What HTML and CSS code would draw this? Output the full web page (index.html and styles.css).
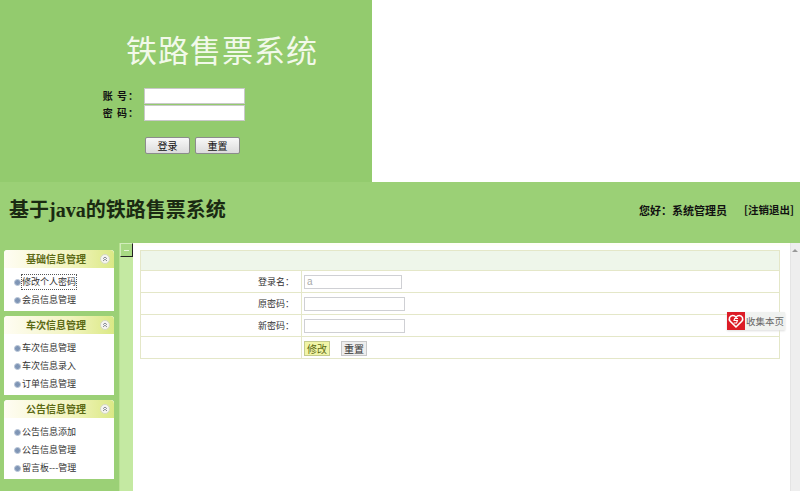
FILE: index.html
```html
<!DOCTYPE html>
<html lang="zh">
<head>
<meta charset="utf-8">
<title>铁路售票系统</title>
<link rel="stylesheet" href="styles.css">
</head>
<body>
<section class="login-row">
  <form class="login">
    <h1 class="login-title">铁路售票系统</h1>
    <div class="login-fields">
      <label class="login-label">账 号：</label><input class="login-input" type="text">
      <label class="login-label">密 码：</label><input class="login-input" type="password">
    </div>
    <div class="login-actions">
      <button class="login-btn" type="button">登录</button>
      <button class="login-btn" type="button">重置</button>
    </div>
  </form>
</section>
<header class="top">
  <div class="brand">基于java的铁路售票系统</div>
  <div class="user"><span>您好：系统管理员</span><span class="logout">[注销退出]</span></div>
</header>
<div class="main">
  <aside class="side">
    <div class="panel">
      <div class="panel-head"><span class="panel-title">基础信息管理</span><svg class="fold" viewBox="0 0 10 10" width="10" height="10"><circle cx="5" cy="5" r="4.500" fill="#f6f6f0" stroke="#d6d8c4"/><path d="M3 4.800 5 3l2 1.800M3 7 5 5.200 7 7" fill="none" stroke="#7a7f8c" stroke-width=".9"/></svg></div>
      <ul class="menu">
        <li><span class="focus">修改个人密码</span></li>
        <li>会员信息管理</li>
      </ul>
    </div>
    <div class="panel">
      <div class="panel-head"><span class="panel-title">车次信息管理</span><svg class="fold" viewBox="0 0 10 10" width="10" height="10"><circle cx="5" cy="5" r="4.500" fill="#f6f6f0" stroke="#d6d8c4"/><path d="M3 4.800 5 3l2 1.800M3 7 5 5.200 7 7" fill="none" stroke="#7a7f8c" stroke-width=".9"/></svg></div>
      <ul class="menu">
        <li>车次信息管理</li>
        <li>车次信息录入</li>
        <li>订单信息管理</li>
      </ul>
    </div>
    <div class="panel">
      <div class="panel-head"><span class="panel-title">公告信息管理</span><svg class="fold" viewBox="0 0 10 10" width="10" height="10"><circle cx="5" cy="5" r="4.500" fill="#f6f6f0" stroke="#d6d8c4"/><path d="M3 4.800 5 3l2 1.800M3 7 5 5.200 7 7" fill="none" stroke="#7a7f8c" stroke-width=".9"/></svg></div>
      <ul class="menu">
        <li>公告信息添加</li>
        <li>公告信息管理</li>
        <li>留言板---管理</li>
      </ul>
    </div>
  </aside>
  <div class="splitter"><span class="split-btn"></span></div>
  <main class="content">
    <table class="form-table">
      <tr><td class="caption" colspan="2"></td></tr>
      <tr><td class="key">登录名：</td><td class="val"><input class="field short" type="text" value="a" readonly></td></tr>
      <tr><td class="key">原密码：</td><td class="val"><input class="field" type="password"></td></tr>
      <tr><td class="key">新密码：</td><td class="val"><input class="field" type="password"></td></tr>
      <tr><td class="key"></td><td class="val"><button class="act act-on" type="button">修改</button><button class="act" type="button">重置</button></td></tr>
    </table>
    <div class="collect">
      <svg class="collect-icon" viewBox="0 0 18 18" width="18" height="18"><rect width="18" height="18" fill="#dc1c26"/><path d="M9 15 3.200 9.300C1.200 7 2.700 3.500 5.700 3.500 7.100 3.500 8.200 4.200 9 5.300 9.800 4.200 10.900 3.500 12.300 3.500c3 0 4.500 3.500 2.500 5.800Z" fill="none" stroke="#fff" stroke-width="1.600"/><path d="M11 6.500H7.700L7 8.500h3.400L9.600 11H6.800" fill="none" stroke="#fff" stroke-width="1.100"/></svg>
      <span class="collect-text">收集本页</span>
    </div>
  </main>
  <div class="scroll"><span class="arrow"></span></div>
</div>
</body>
</html>
```
FILE: styles.css
```css
* { box-sizing: border-box; }
html, body { margin: 0; height: 491px; overflow: hidden; }
body { background: #fff; font-family: "Noto Sans CJK SC", "Liberation Sans", sans-serif; color: #222; }
.login-row { height: 182px; }
.login { width: 372px; height: 182px; background: #93cb6e; padding-top: 32px; }
.login-title { margin: 0 0 0 126px; font: 400 31px/40px "Liberation Serif", "Noto Sans CJK SC", serif; color: #f2f9ea; letter-spacing: 1px; white-space: nowrap; }
.login-fields { display: grid; grid-template-columns: 144px 101px; row-gap: 1px; margin-top: 16px; }
.login-label { font: 700 10px/16px "Noto Sans CJK SC", sans-serif; letter-spacing: 1px; text-align: right; padding-right: 5px; color: #111; }
.login-input { height: 16px; width: 101px; border: 1px solid #c9c9c9; background: #fff; padding: 0; }
.login-actions { display: flex; gap: 5px; margin: 16px 0 0 145px; }
.login-btn { width: 45px; height: 17px; padding: 0; font: 400 10px/14px "Noto Sans CJK SC", sans-serif; color: #111; border: 1px solid #8c8c8c; border-radius: 2px; background: linear-gradient(#f8f8f8, #dcdcdc); }
.top { height: 61px; background: #9bd076; display: flex; justify-content: space-between; padding: 14px 6px 0 9px; }
.brand { font: 700 20px/28px "Liberation Serif", "Noto Sans CJK SC", serif; color: #1a2a12; white-space: nowrap; }
.user { display: flex; gap: 17px; font: 700 11px/28px "Noto Sans CJK SC", sans-serif; color: #111; }
.logout { font-size: 10.5px; }
.main { display: flex; height: 248px; }
.side { flex: none; width: 119px; background: #9bd076; padding: 7px 5px 0 4px; display: flex; flex-direction: column; gap: 5px; }
.panel { background: #fff; border-radius: 3px 3px 0 0; padding-bottom: 3px; }
.panel-head { height: 18px; display: flex; align-items: center; border-radius: 4px 4px 0 0; background: linear-gradient(90deg, #fffdf4, #f2f4c0 60%, #dbe985); position: relative; justify-content: center; padding-right: 6px; }
.panel-title { font: 700 10px/18px "Noto Sans CJK SC", sans-serif; color: #5c6a14; }
.fold { position: absolute; right: 4px; top: 4px; }
.menu { list-style: none; margin: 0; padding: 4px 0 0 18px; }
.menu li { height: 18px; font: 400 9px/20px "Noto Sans CJK SC", sans-serif; color: #333; position: relative; white-space: nowrap; }
.menu li::before { content: ""; position: absolute; left: -8px; top: 7px; width: 5px; height: 5px; border-radius: 50%; background: #7f95b5; border: 1px solid #b9c6d8; }
.focus { outline: 1px dotted #555; padding-bottom: 1px; }
.splitter { flex: none; width: 14px; background: #c4e9a2; position: relative; border-left: 1px solid #b7e092; }
.split-btn { position: absolute; left: 0; top: 0; width: 13px; height: 14px; background: #a7d983; border: 1px solid #d1edba; border-right-color: #222; border-bottom-color: #222; }
.split-btn::after { content: ""; position: absolute; left: 3px; top: 6px; width: 5px; height: 1px; background: #e4f4d6; }
.content { flex: 1; background: #fff; padding: 4px 10px 0 7px; position: relative; border-top: 3px solid #fffff8; }
.form-table { width: 640px; border-collapse: collapse; border: 1px solid #e4e7c8; font-size: 10px; }
.form-table td { border: 1px solid #e4e7c8; padding: 0; height: 22px; }
.form-table .caption { height: 20px; background: #eef6ea; }
.form-table .key { width: 161px; text-align: right; padding-right: 7px; font: 400 9px/14px "Noto Sans CJK SC", sans-serif; color: #333; }
.form-table .val { padding-left: 2px; }
.field { display: block; width: 101px; height: 14px; border: 1px solid #cfd0d4; padding: 0 2px; font: 400 10px/12px "Liberation Sans", sans-serif; color: #aaa; background: #fff; }
.field.short { width: 98px; }
.act { width: 26px; height: 15px; padding: 0; margin-right: 11px; display: inline-block; vertical-align: middle; font: 400 10px/13px "Noto Sans CJK SC", sans-serif; color: #333; border: 1px solid #c8c8c8; background: #eee; border-radius: 0; }
.act-on { background: #f1f5a6; border-color: #c5cb8d; color: #5c6a14; }
.collect { position: absolute; right: 5px; top: 66px; width: 58px; height: 18px; display: flex; align-items: center; gap: 1px; background: #f0f2f0; box-shadow: 0 1px 2px #ddd; font: 400 9.500px/18px "Noto Sans CJK SC", sans-serif; color: #666; white-space: nowrap; }
.collect-icon { flex: none; }
.scroll { flex: none; width: 10px; background: #eee; position: relative; border-left: 1px solid #e4e4e4; }
.arrow { position: absolute; left: 1px; top: 6px; border: 3px solid transparent; border-top: 0; border-bottom: 3px solid #999; }
```
